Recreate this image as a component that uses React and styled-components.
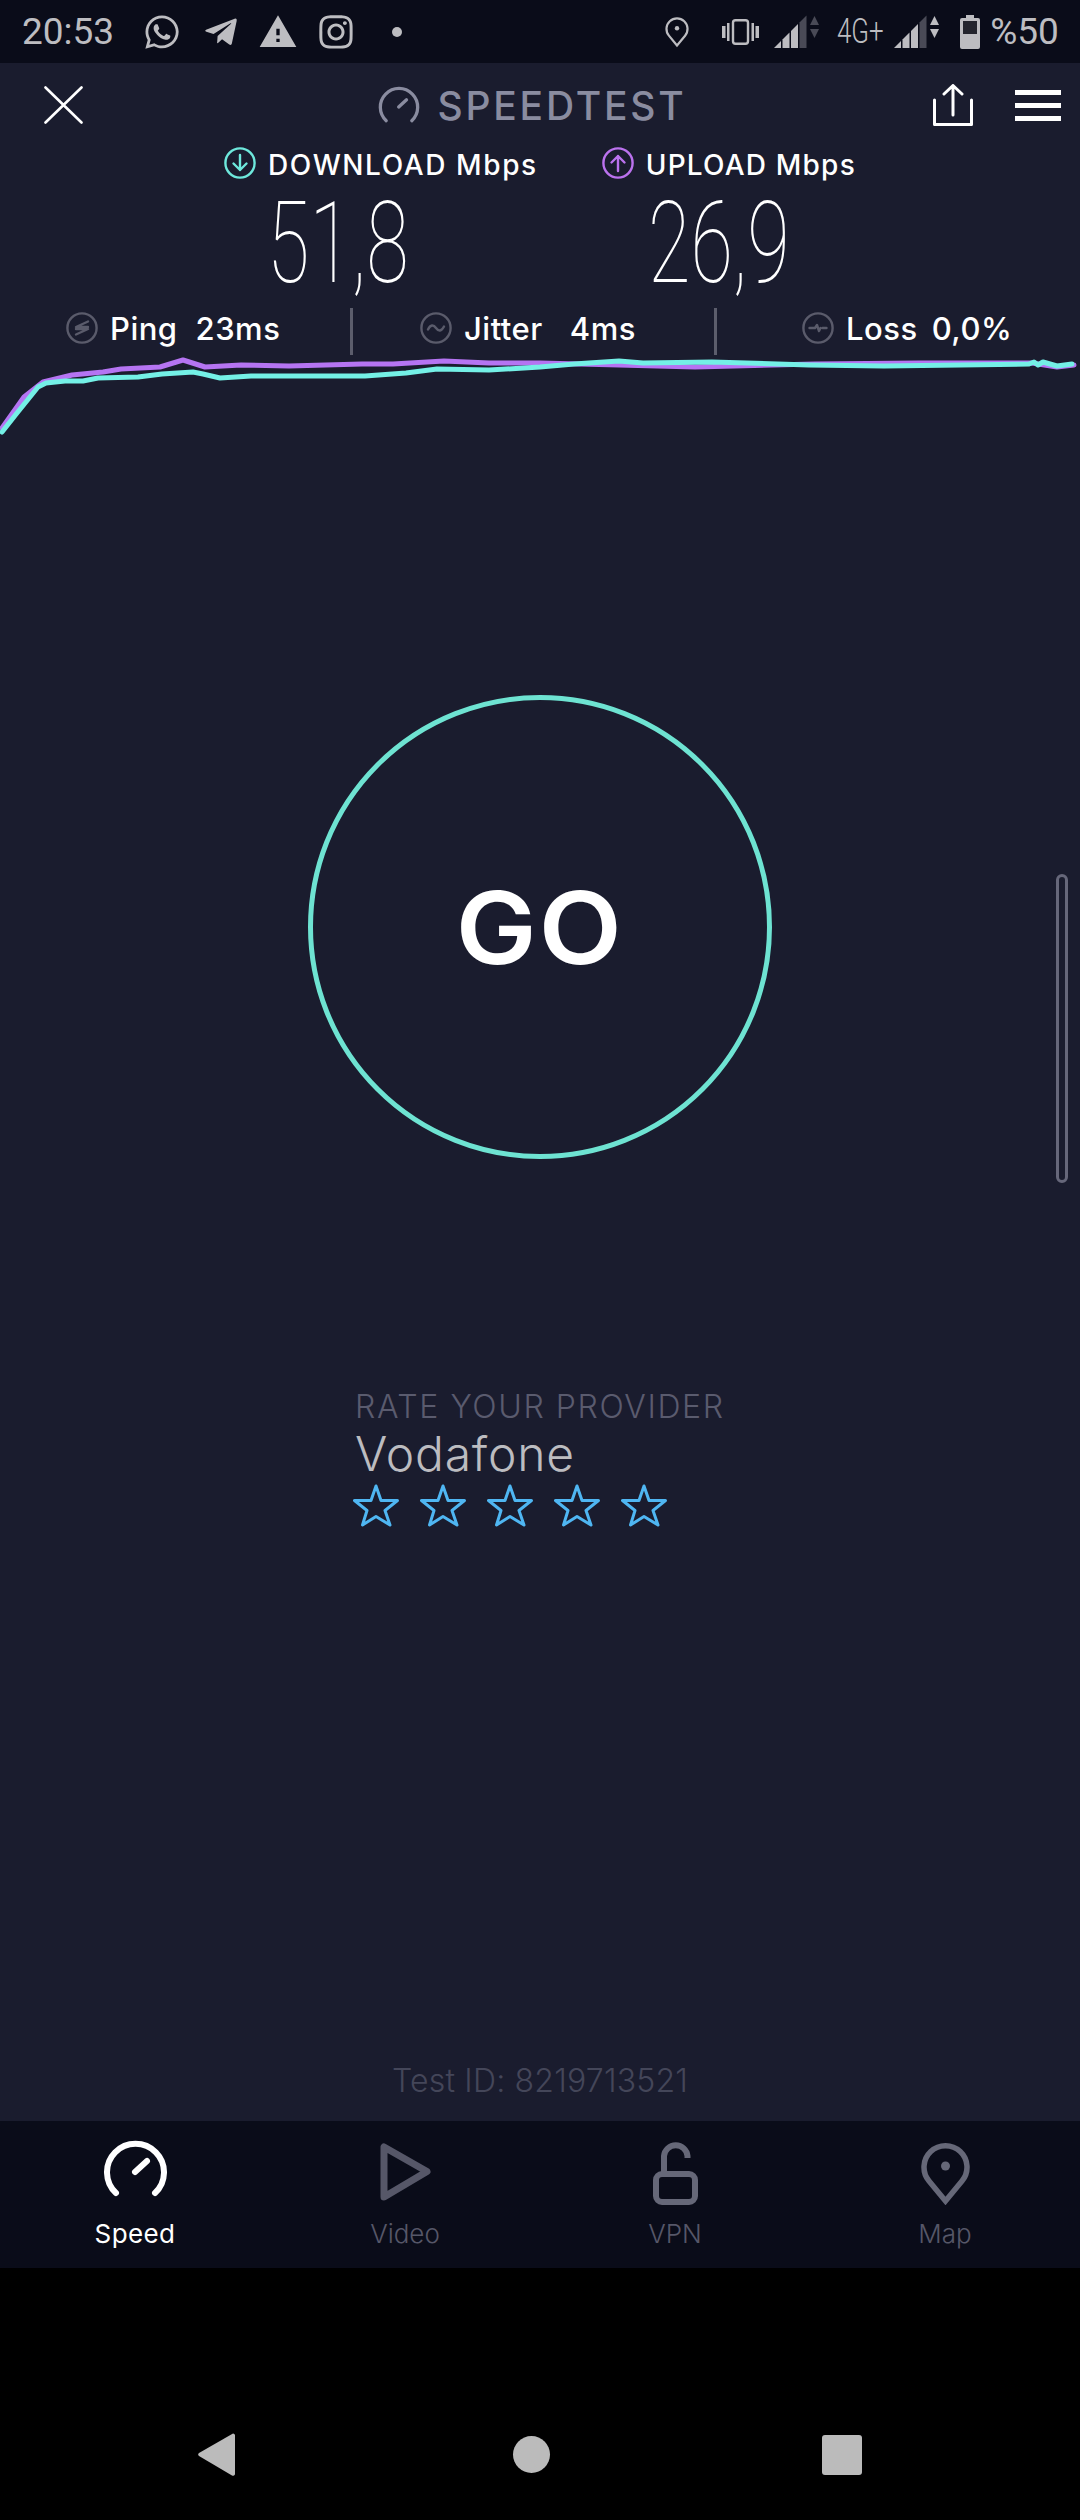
import React from 'react'
import styled, { createGlobalStyle } from 'styled-components'
import { FaWhatsapp, FaTelegramPlane, FaInstagram } from 'react-icons/fa'
import { MdWarning } from 'react-icons/md'

const GlobalStyle = createGlobalStyle`
    html, body {
        margin: 0;
        padding: 0;
        background: #000;
    }
    * {
        box-sizing: border-box;
    }
`

const Page = styled.div`
    width: 1080px;
    height: 2520px;
    display: flex;
    flex-direction: column;
    background: #000;
    font-family: Inter, 'Open Sans', sans-serif;
    color: #fff;
    overflow: hidden;
`

const StatusBar = styled.div`
    height: 63px;
    flex: none;
    background: #0a0c19;
    color: #bdbdc1;
    display: flex;
    align-items: center;
    padding: 0 22px;
    font-family: Roboto, sans-serif;
`

const StatusGroup = styled.div`
    display: flex;
    align-items: center;
    gap: ${({ $gap }) => $gap || 0}px;
    margin-left: ${({ $left }) => $left || 0}px;
`

const Clock = styled.span`
    font-size: 37px;
    line-height: 1;
`

const Dot = styled.span`
    width: 10px;
    height: 10px;
    border-radius: 50%;
    background: #bdbdc1;
`

const NetworkType = styled.span`
    display: block;
    width: 49px;
    font-size: 35px;
    font-weight: 300;
    line-height: 1;
    white-space: nowrap;
    transform: scaleX(0.74);
    transform-origin: left center;
`

const Battery = styled.span`
    font-size: 37px;
    line-height: 1;
`

const Main = styled.main`
    position: relative;
    flex: none;
    height: 2058px;
    background: #1a1c2e;
    display: flex;
    flex-direction: column;
`

const Header = styled.header`
    height: 84px;
    flex: none;
    display: grid;
    grid-template-columns: 1fr auto 1fr;
    align-items: center;
    padding: 0 19px 0 44px;
`

const Brand = styled.div`
    display: flex;
    align-items: center;
    gap: 17px;
    font-size: 39px;
    font-weight: 500;
    letter-spacing: 2.8px;
    color: #8a8ca0;
    margin-left: -40px;
`

const HeaderActions = styled.div`
    display: flex;
    align-items: center;
    justify-content: flex-end;
    gap: 42px;
`

const MenuButton = styled.div`
    width: 46px;
    display: flex;
    flex-direction: column;
    gap: 8px;

    span {
        display: block;
        height: 5px;
        background: #fff;
    }
`

const SpeedRow = styled.section`
    height: 161px;
    flex: none;
    display: flex;
    padding-left: 224px;
    gap: 64px;
`

const SpeedColumn = styled.div`
    display: flex;
    flex-direction: column;
`

const SpeedLabel = styled.div`
    display: flex;
    align-items: center;
    gap: 12px;
    height: 32px;
    font-size: 28px;
    font-weight: 500;
    letter-spacing: ${({ $spacing }) => $spacing}px;
    white-space: nowrap;
`

const SpeedLabelText = styled.span`
    margin-top: 3px;
    line-height: 1;
`

const SpeedValue = styled.div`
    margin-left: ${({ $indent }) => $indent}px;
    margin-top: 9px;
    font-family: Roboto, sans-serif;
    font-weight: 100;
    font-size: 114px;
    line-height: 110px;
    white-space: nowrap;
    transform: scaleX(0.68);
    transform-origin: left center;
`

const StatsRow = styled.section`
    height: 47px;
    flex: none;
    display: grid;
    grid-template-columns: 353px 364px 1fr;
`

const StatCell = styled.div`
    display: flex;
    align-items: center;
    padding-left: ${({ $pad }) => $pad}px;
    padding-bottom: 7px;
    font-size: 31px;
    font-weight: 500;
    letter-spacing: 0.5px;
    white-space: nowrap;
    border-right: ${({ $divider }) => ($divider ? '3px solid #5c5d6c' : 'none')};
`

const StatName = styled.span`
    margin-left: 12px;
    margin-right: ${({ $gap }) => $gap}px;
`

const Chart = styled.svg`
    display: block;
    flex: none;
    width: 1080px;
    height: 85px;
`

const GoCircle = styled.div`
    flex: none;
    width: 464px;
    height: 464px;
    margin: 255px auto 0;
    border: 5px solid #6ee3d2;
    border-radius: 50%;
    display: flex;
    align-items: center;
    justify-content: center;
`

const GoLabel = styled.span`
    font-size: 100px;
    font-weight: 600;
    letter-spacing: 2px;
    transform: scaleX(1.08);
`

const ScrollThumb = styled.div`
    position: absolute;
    top: 811px;
    right: 12px;
    width: 12px;
    height: 309px;
    border: 3px solid #66677a;
    border-radius: 6px;
`

const Rating = styled.section`
    margin: 229px 0 0 355px;
`

const RatingTitle = styled.div`
    font-size: 32px;
    font-weight: 300;
    letter-spacing: 1.6px;
    line-height: 38px;
    color: #5a5b6e;
    white-space: nowrap;
`

const ProviderName = styled.div`
    font-size: 48px;
    font-weight: 300;
    letter-spacing: 0.8px;
    line-height: 56px;
    color: #bcbcc0;
`

const Stars = styled.div`
    display: flex;
    gap: 21px;
    margin: 2px 0 0 -2px;
`

const TestId = styled.div`
    margin-top: auto;
    padding-bottom: 22px;
    text-align: center;
    font-size: 32px;
    font-weight: 300;
    letter-spacing: 0.2px;
    line-height: 36px;
    color: #444659;
`

const TabBar = styled.nav`
    height: 147px;
    flex: none;
    background: #0a0c19;
    display: grid;
    grid-template-columns: repeat(4, 1fr);
`

const Tab = styled.div`
    display: flex;
    flex-direction: column;
    align-items: center;
    color: ${({ $active }) => ($active ? '#fff' : '#565768')};
`

const TabIcon = styled.div`
    height: 66px;
    margin-top: ${({ $active }) => ($active ? 19 : 21)}px;
    margin-bottom: ${({ $active }) => ($active ? 11 : 9)}px;
    display: flex;
    align-items: flex-start;
`

const TabLabel = styled.span`
    font-size: 26px;
    font-weight: ${({ $active }) => ($active ? 400 : 300)};
    letter-spacing: ${({ $active }) => ($active ? 0.4 : 0)}px;
    line-height: 34px;
`

const NavBar = styled.div`
    flex: 1;
    display: grid;
    grid-template-columns: 315px 309px 40px;
    align-items: center;
    align-content: start;
    padding: 165px 0 0 198px;
`

const NavCircle = styled.div`
    width: 37px;
    height: 37px;
    border-radius: 50%;
    background: #bbb;
`

const NavSquare = styled.div`
    width: 40px;
    height: 40px;
    border-radius: 3px;
    background: #bbb;
`

const cyanPoints = [
    [2, 432], [17, 413], [38, 387], [46, 383], [65, 381], [83, 381], [98, 378], [138, 377], [162, 374],
    [193, 372], [203, 374], [220, 378], [251, 376], [365, 376], [406, 373], [437, 369], [489, 370],
    [540, 367], [574, 364], [619, 361], [643, 363], [712, 362], [809, 365], [884, 366], [1029, 364],
    [1034, 362], [1038, 365], [1043, 362], [1057, 366], [1072, 364],
]

const purplePoints = [
    [2, 428], [24, 397], [43, 382], [72, 375], [103, 372], [121, 369], [160, 367], [183, 360], [205, 367],
    [241, 365], [289, 366], [362, 364], [393, 364], [444, 361], [489, 363], [540, 363], [619, 365],
    [695, 367], [815, 364], [919, 363], [1032, 363], [1057, 367], [1074, 365],
]

const toLine = (points) => points.map((point) => point.join(',')).join(' ')

const signalBars = [
    [0, 7],
    [8.5, 15.5],
    [17, 24],
    [25.5, 32.5],
]

const Signal = ({ arrows }) => (
    <svg width="45" height="34" viewBox="0 0 45 34">
        {signalBars.map(([from, to], index) => (
            <polygon
                key={from}
                fill={index === 3 ? '#494a56' : '#bdbdc1'}
                points={`${from},${33 - from} ${to},${33 - to} ${to},33 ${from},33`}
            />
        ))}
        <polygon points="36,10 45,10 40.5,1" fill={arrows} />
        <polygon points="36,14 45,14 40.5,23" fill={arrows} />
    </svg>
)

const Gauge = ({ width, height, stroke }) => (
    <svg width={width} height={height} viewBox="0 0 63 58" fill="none" stroke="currentColor" strokeWidth={stroke} strokeLinecap="round">
        <path d="M12 53A28.5 28.5 0 1 1 51 53" />
        <path d="M31 32L43 21" />
    </svg>
)

const Pin = ({ width, height, stroke }) => (
    <svg width={width} height={height} viewBox="0 0 49 63" fill="none" stroke="currentColor" strokeWidth={stroke}>
        <path d="M24.5 59L8 39A21.5 21.5 0 1 1 41 39Z" strokeLinejoin="miter" />
        <circle cx="24.5" cy="24" r="4.5" fill="currentColor" stroke="none" />
    </svg>
)

const RoundIcon = ({ color, children }) => (
    <svg width="32" height="32" viewBox="0 0 32 32" fill="none" stroke={color} strokeWidth="2.4" strokeLinecap="round" strokeLinejoin="round">
        <circle cx="16" cy="16" r="14.6" />
        {children}
    </svg>
)

const Star = () => (
    <svg width="46" height="43" viewBox="0 0 46 43" fill="none" stroke="#4fb6f2" strokeWidth="3" strokeLinejoin="round">
        <polygon points="23,2 28,16.5 44.5,16.5 32,26.5 37,41 23,32.5 9.5,41 14,26.5 1.5,16.5 18,16.5" />
    </svg>
)

const App = () => (
    <Page>
        <GlobalStyle />
        <StatusBar>
            <Clock>20:53</Clock>
            <StatusGroup $left={29} $gap={22}>
                <FaWhatsapp size={38} />
                <FaTelegramPlane size={36} />
                <MdWarning size={40} style={{ margin: '0 -3px' }} />
                <FaInstagram size={38} />
            </StatusGroup>
            <StatusGroup $left={37}>
                <Dot />
            </StatusGroup>
            <StatusGroup $left={263} $gap={33}>
                <Pin width={24} height={34} stroke={4.5} />
                <svg width="37" height="26" viewBox="0 0 37 26" fill="#bdbdc1">
                    <rect x="0" y="7" width="3.5" height="12" />
                    <rect x="5" y="4" width="2.5" height="18" />
                    <rect x="11" y="1.2" width="15" height="23.6" rx="2.5" fill="none" stroke="#bdbdc1" strokeWidth="2.4" />
                    <rect x="29.5" y="4" width="2.5" height="18" />
                    <rect x="33.5" y="7" width="3.5" height="12" />
                </svg>
            </StatusGroup>
            <StatusGroup $left={15}>
                <Signal arrows="#494a56" />
            </StatusGroup>
            <StatusGroup $left={18}>
                <NetworkType>4G+</NetworkType>
            </StatusGroup>
            <StatusGroup $left={8}>
                <Signal arrows="#bdbdc1" />
            </StatusGroup>
            <StatusGroup $left={21}>
                <svg width="20" height="34" viewBox="0 0 20 34">
                    <path d="M6 0H14V3H18A2 2 0 0 1 20 5V32A2 2 0 0 1 18 34H2A2 2 0 0 1 0 32V5A2 2 0 0 1 2 3H6Z" fill="#bdbdc1" />
                    <rect x="3" y="6" width="14" height="13" fill="#24252e" />
                </svg>
            </StatusGroup>
            <StatusGroup $left={10}>
                <Battery>%50</Battery>
            </StatusGroup>
        </StatusBar>
        <Main>
            <Header>
                <svg width="39" height="38" viewBox="0 0 39 38" fill="none" stroke="#fff" strokeWidth="2.6" strokeLinecap="round">
                    <path d="M1.5 1.5L37.5 36.5M37.5 1.5L1.5 36.5" />
                </svg>
                <Brand>
                    <Gauge width={42} height={38} stroke={5} />
                    SPEEDTEST
                </Brand>
                <HeaderActions>
                    <svg width="40" height="42" viewBox="0 0 40 42" fill="none" stroke="#fff" strokeWidth="3" strokeLinecap="round" strokeLinejoin="round">
                        <path d="M1.5 16V40.5H38.5V16" />
                        <path d="M20 31V2M11 10L20 1.5L29 10" />
                    </svg>
                    <MenuButton>
                        <span />
                        <span />
                        <span />
                    </MenuButton>
                </HeaderActions>
            </Header>
            <SpeedRow>
                <SpeedColumn>
                    <SpeedLabel $spacing={1.6}>
                        <RoundIcon color="#6ee8dc">
                            <path d="M16 8V23M9.5 16.5L16 23L22.5 16.5" />
                        </RoundIcon>
                        <SpeedLabelText>DOWNLOAD Mbps</SpeedLabelText>
                    </SpeedLabel>
                    <SpeedValue $indent={43}>51,8</SpeedValue>
                </SpeedColumn>
                <SpeedColumn>
                    <SpeedLabel $spacing={1.2}>
                        <RoundIcon color="#bb72ee">
                            <path d="M16 24V9M9.5 15.5L16 9L22.5 15.5" />
                        </RoundIcon>
                        <SpeedLabelText>UPLOAD Mbps</SpeedLabelText>
                    </SpeedLabel>
                    <SpeedValue $indent={46}>26,9</SpeedValue>
                </SpeedColumn>
            </SpeedRow>
            <StatsRow>
                <StatCell $pad={66} $divider>
                    <RoundIcon color="#5a5b6b">
                        <path d="M22 9.5L10 15H22M10 22.5L22 17H10" />
                    </RoundIcon>
                    <StatName $gap={18}>Ping</StatName>
                    23ms
                </StatCell>
                <StatCell $pad={67} $divider>
                    <RoundIcon color="#5a5b6b">
                        <path d="M8 17.5C10.5 12.5 13.5 12.5 16 16S21.5 19.5 24 14.5" />
                    </RoundIcon>
                    <StatName $gap={27}>Jitter</StatName>
                    4ms
                </StatCell>
                <StatCell $pad={85}>
                    <RoundIcon color="#5a5b6b">
                        <path d="M7.5 16H13L15 13L17 19L18.5 16M20.5 16H24.5" />
                    </RoundIcon>
                    <StatName $gap={14}>Loss</StatName>
                    0,0%
                </StatCell>
            </StatsRow>
            <Chart viewBox="0 355 1080 85" fill="none" strokeWidth="5" strokeLinejoin="round" strokeLinecap="round">
                <polyline points={toLine(purplePoints)} stroke="#b574f2" />
                <polyline points={toLine(cyanPoints)} stroke="#74f0e6" />
            </Chart>
            <GoCircle>
                <GoLabel>GO</GoLabel>
            </GoCircle>
            <ScrollThumb />
            <Rating>
                <RatingTitle>RATE YOUR PROVIDER</RatingTitle>
                <ProviderName>Vodafone</ProviderName>
                <Stars>
                    {[1, 2, 3, 4, 5].map((n) => (
                        <Star key={n} />
                    ))}
                </Stars>
            </Rating>
            <TestId>Test ID: 8219713521</TestId>
        </Main>
        <TabBar>
            <Tab $active>
                <TabIcon $active>
                    <Gauge width={63} height={58} stroke={6} />
                </TabIcon>
                <TabLabel $active>Speed</TabLabel>
            </Tab>
            <Tab>
                <TabIcon>
                    <svg width="53" height="60" viewBox="0 0 53 60" fill="none" stroke="currentColor" strokeWidth="7" strokeLinejoin="round">
                        <path d="M5 5V55L48 29.5Z" />
                    </svg>
                </TabIcon>
                <TabLabel>Video</TabLabel>
            </Tab>
            <Tab>
                <TabIcon>
                    <svg width="45" height="63" viewBox="0 0 45 63" fill="none" stroke="#666878" strokeWidth="6">
                        <rect x="3" y="32" width="39" height="28" rx="6" />
                        <path d="M11 30V14A11.8 11.8 0 0 1 34.5 14V16" />
                    </svg>
                </TabIcon>
                <TabLabel>VPN</TabLabel>
            </Tab>
            <Tab>
                <TabIcon>
                    <span style={{ color: '#666878', display: 'flex' }}>
                        <Pin width={49} height={63} stroke={5.5} />
                    </span>
                </TabIcon>
                <TabLabel>Map</TabLabel>
            </Tab>
        </TabBar>
        <NavBar>
            <svg width="37" height="43" viewBox="0 0 37 43">
                <path d="M35 0.5A2 2 0 0 1 37 2V41A2 2 0 0 1 34 42.5L1 23A2 2 0 0 1 1 20Z" fill="#bbb" />
            </svg>
            <NavCircle />
            <NavSquare />
        </NavBar>
    </Page>
)

export default App
